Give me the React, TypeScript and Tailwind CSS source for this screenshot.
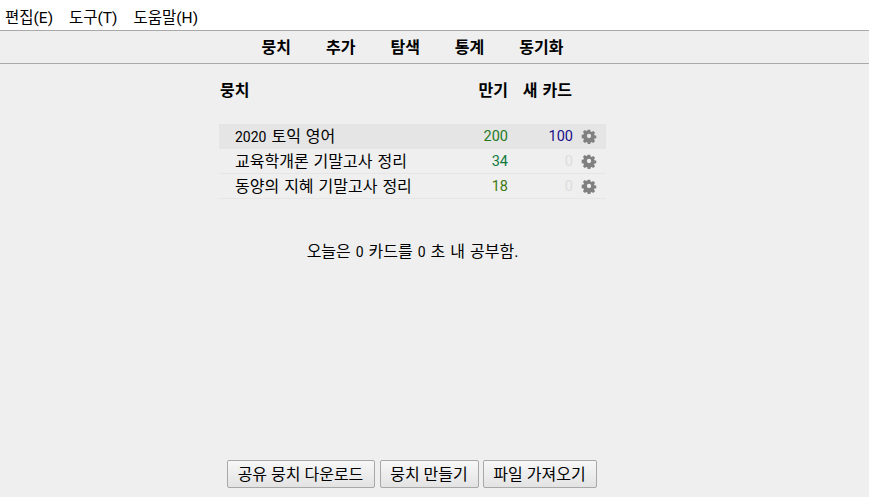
const decks = [
  { name: <><span className="text-[14px]">2020</span> 토익 영어</>, key: "toeic", due: 200, fresh: 100, active: true, dueColor: "text-[#1f7a1f]" },
  { name: "교육학개론 기말고사 정리", key: "edu", due: 34, fresh: 0, active: false, dueColor: "text-[#0f7a3c]" },
  { name: "동양의 지혜 기말고사 정리", key: "east", due: 18, fresh: 0, active: false, dueColor: "text-[#3f7a10]" },
];

const menus = ["편집(E)", "도구(T)", "도움말(H)"];
const tabs = ["뭉치", "추가", "탐색", "통계", "동기화"];
const buttons = [
  { label: "공유 뭉치 다운로드", width: "w-[148px]" },
  { label: "뭉치 만들기", width: "w-[99px]" },
  { label: "파일 가져오기", width: "w-[114px]" },
];

function Gear() {
  return (
    <svg viewBox="0 0 16 16" className="w-[16px] h-[16px] text-[#808080]" fill="currentColor">
      <path
        fillRule="evenodd"
        d="M6.6 1h2.8l.4 2 1.1.5 1.8-1.1 2 2-1.1 1.8.5 1.1 2 .4v2.8l-2 .4-.5 1.1 1.1 1.8-2 2-1.8-1.1-1.1.5-.4 2H6.6l-.4-2-1.1-.5-1.8 1.1-2-2 1.1-1.8-.5-1.1-2-.4V6.6l2-.4.5-1.1-1.1-1.8 2-2 1.8 1.1 1.1-.5zM8 5.6a2.4 2.4 0 1 0 0 4.8 2.4 2.4 0 0 0 0-4.8z"
        transform="translate(0.8 0.8) scale(0.9)"
      />
    </svg>
  );
}

export default function App() {
  return (
    <div className="w-[869px] h-[497px] overflow-hidden flex flex-col bg-[#efefef] text-[16px] [word-spacing:1px] text-black font-['Roboto','Noto_Sans_CJK_KR',sans-serif]">
      {/* menu bar */}
      <div className="h-[31px] shrink-0 bg-white border-b border-[#a9a9a9] flex items-start pt-[8px] pl-[5px] gap-[16px] leading-[20px] text-[15.5px]">
        {menus.map(m => (
          <span key={m}>{m}</span>
        ))}
      </div>

      {/* top links */}
      <div className="h-[33px] shrink-0 pt-[2px] border-b border-[#a9a9a9] pr-[44px] flex justify-center items-center gap-[35px] font-bold">
        {tabs.map(t => (
          <span key={t}>{t}</span>
        ))}
      </div>

      <div className="flex-1 pr-[44px] flex flex-col items-center">
        <div className="w-[387px]">
          <div className="flex items-center h-[20px] mt-[17px] font-bold">
            <span className="flex-1 pl-[1px]">뭉치</span>
            <span className="w-[60px] text-right">만기</span>
            <span className="w-[64px] text-right">새 카드</span>
            <span className="w-[34px]" />
          </div>

          <div className="mt-[23px]">
            {decks.map(d => (
              <div
                key={d.key}
                className={`h-[25px] pt-[1px] flex items-center border-b ${d.active ? "bg-[#e5e5e5] border-transparent" : "border-[#e6e6e6]"}`}
              >
                <span className="flex-1 pl-[16px]">{d.name}</span>
                <span className={`w-[60px] text-right text-[14.5px] ${d.dueColor}`}>{d.due}</span>
                <span className={`w-[65px] text-right text-[14.5px] ${d.fresh ? "text-[#1a0f8a]" : "text-[#dddddd]"}`}>{d.fresh}</span>
                <span className="w-[33px] flex justify-start pl-[8px] mb-[1px]">
                  <Gear />
                </span>
              </div>
            ))}
          </div>
        </div>

        <p className="mt-[43px] leading-[20px]">
          오늘은 <span className="text-[14px]">0</span> 카드를 <span className="text-[14px]">0</span> 초 내 공부함.
        </p>

        <div className="mt-auto mb-[9px] mr-[2px] flex">
          {buttons.map((b, i) => (
            <button
              key={b.label}
              className={`h-[28px] pt-[1px] ${b.width} ${i === 1 ? "mr-[4px] ml-[5px]" : ""} rounded-[2px] border border-[#a8a8a8] bg-gradient-to-b from-[#f7f7f7] to-[#e3e3e3] leading-[20px] whitespace-nowrap`}
            >
              {b.label}
            </button>
          ))}
        </div>
      </div>
    </div>
  );
}
